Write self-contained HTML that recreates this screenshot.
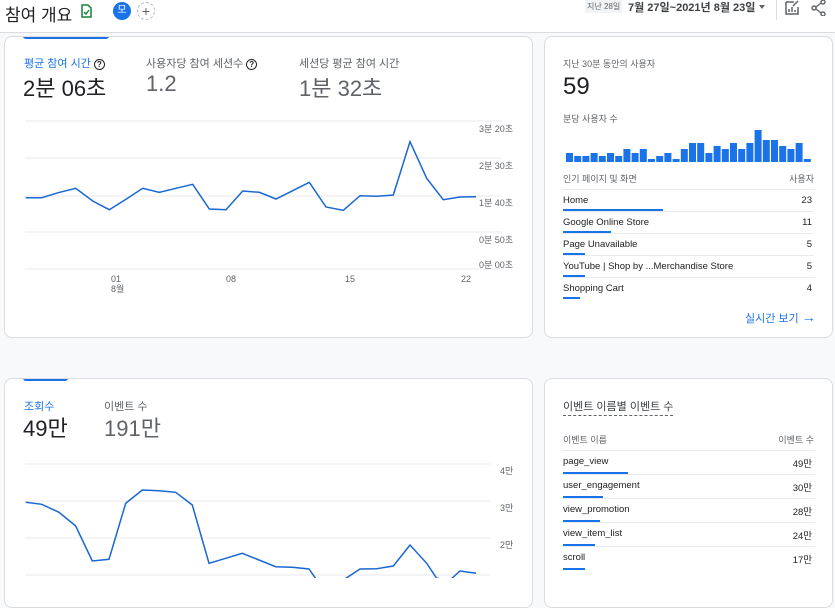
<!DOCTYPE html>
<html><head><meta charset="utf-8">
<style>
*{box-sizing:border-box;margin:0;padding:0}
body{width:835px;height:578px;overflow:hidden;background:#f8f9fa;font-family:"Liberation Sans","Noto Sans CJK KR",sans-serif;color:#202124;position:relative}
.abs{position:absolute}
.card{position:absolute;background:#fff;border:1px solid #dadce0;border-radius:8px;overflow:hidden}
.lbl{font-size:11px;color:#5f6368;position:absolute;white-space:nowrap}
.big{position:absolute;font-size:22px;white-space:nowrap}
.row{position:absolute;left:18px;right:18px;height:22px;border-top:1px solid #e8eaed;font-size:9.5px;color:#202124}
.row span.r{position:absolute;right:2px;top:5px}
.row span.l{position:absolute;left:0;top:5px}
.row i{position:absolute;left:0;bottom:0;height:2px;background:#1a73e8}
.ax{position:absolute;font-size:9px;color:#5f6368;white-space:nowrap}
</style></head><body>
<div class="abs" style="left:0;top:0;width:835px;height:33px;background:#fff;border-bottom:1px solid #dadce0"></div>
<div class="abs" style="left:5px;top:1px;font-size:17px">참여 개요</div>
<svg class="abs" style="left:80px;top:4px" width="13" height="14" viewBox="0 0 13 14"><path d="M2 1h6l3 3v9H2z" fill="none" stroke="#188038" stroke-width="1.5"/><path d="M4 8l2 2 3-4" fill="none" stroke="#188038" stroke-width="1.4"/></svg>
<div class="abs" style="left:113px;top:2px;width:18px;height:18px;border-radius:50%;background:#1a73e8;color:#fff;font-size:10px;text-align:center;line-height:18px">모</div>
<div class="abs" style="left:137px;top:2px;width:18px;height:18px;border-radius:50%;border:1px dashed #bbb;color:#5f6368;font-size:14px;text-align:center;line-height:16px">+</div>
<div class="abs" style="left:585px;top:0;font-size:8px;color:#5f6368;background:#f1f3f4;padding:1px 2px">지난 28일</div>
<div class="abs" style="left:628px;top:-1px;font-size:11px;font-weight:bold;color:#3c4043">7월 27일~2021년 8월 23일</div>
<div class="abs" style="left:759px;top:5px;border:3px solid transparent;border-top:4px solid #5f6368"></div>
<div class="abs" style="left:776px;top:0;width:1px;height:20px;background:#dadce0"></div>
<svg class="abs" style="left:784px;top:0" width="16" height="16" viewBox="0 0 16 16"><path d="M2 2h8M2 2v12h12V7" fill="none" stroke="#5f6368" stroke-width="1.5"/><path d="M5 12V9M8 12V7M11 12V10" stroke="#5f6368" stroke-width="1.5"/><path d="M9 6l5-5" stroke="#5f6368" stroke-width="1.5"/></svg>
<svg class="abs" style="left:811px;top:0" width="16" height="16" viewBox="0 0 16 16"><circle cx="12" cy="2" r="2" fill="none" stroke="#5f6368" stroke-width="1.4"/><circle cx="3" cy="8" r="2" fill="none" stroke="#5f6368" stroke-width="1.4"/><circle cx="12" cy="14" r="2" fill="none" stroke="#5f6368" stroke-width="1.4"/><path d="M5 7l5-4M5 9l5 4" stroke="#5f6368" stroke-width="1.4"/></svg>

<div class="card" style="left:4px;top:36px;width:529px;height:302px">
<div class="abs" style="left:18px;top:-1px;width:86px;height:3px;background:#1a73e8;border-radius:0 0 3px 3px"></div>
<div class="lbl" style="left:19px;top:18px;color:#1a73e8">평균 참여 시간 <b style="color:#202124;border:1.5px solid #202124;border-radius:50%;font-size:8px;padding:0 2px">?</b></div>
<div class="big" style="left:18px;top:34px">2분 06초</div>
<div class="lbl" style="left:141px;top:18px">사용자당 참여 세션수 <b style="color:#202124;border:1.5px solid #202124;border-radius:50%;font-size:8px;padding:0 2px">?</b></div>
<div class="big" style="left:141px;top:34px;color:#5f6368">1.2</div>
<div class="lbl" style="left:294px;top:18px">세션당 평균 참여 시간</div>
<div class="big" style="left:294px;top:34px;color:#5f6368">1분 32초</div>
</div>
<svg class="abs" style="left:0;top:0" width="535" height="340">
<g stroke="#e8eaed" stroke-width="1"><line x1="25" x2="502" y1="121" y2="121"/><line x1="25" x2="502" y1="158" y2="158"/><line x1="25" x2="502" y1="196" y2="196"/><line x1="25" x2="502" y1="232" y2="232"/><line x1="25" x2="502" y1="269" y2="269"/></g>
<polyline fill="none" stroke="#1967d2" stroke-width="1.5" points="25.7,197.7 41.7,197.7 58.3,192.7 75.7,188.3 92.7,201 109.3,209.7 126,199.3 142.7,188.3 159.3,192.3 176,188.3 192.7,184.3 209.3,209 226,209.7 242.7,191 259.3,192.3 276,199 292.7,190.7 309.3,182.3 326,207 343.3,210.3 360,195.7 376.7,196.3 393.3,195 410,141.7 426.7,178.3 443.3,199.7 460,197 476,196.7"/>
</svg>
<div class="ax" style="left:479px;top:122px">3분 20초</div>
<div class="ax" style="left:479px;top:159px">2분 30초</div>
<div class="ax" style="left:479px;top:196px">1분 40초</div>
<div class="ax" style="left:479px;top:233px">0분 50초</div>
<div class="ax" style="left:479px;top:258px">0분 00초</div>
<div class="ax" style="left:111px;top:274px;line-height:10px">01<br>8월</div>
<div class="ax" style="left:226px;top:274px">08</div>
<div class="ax" style="left:345px;top:274px">15</div>
<div class="ax" style="left:461px;top:274px">22</div>

<div class="card" style="left:544px;top:36px;width:289px;height:302px">
<div class="lbl" style="left:18px;top:20px;font-size:9px">지난 30분 동안의 사용자</div>
<div class="big" style="left:18px;top:36px;font-size:24px">59</div>
<div class="lbl" style="left:18px;top:75px;font-size:9px">분당 사용자 수</div>
<div class="lbl" style="left:18px;top:135px;font-size:9px">인기 페이지 및 화면</div>
<div class="lbl" style="right:18px;top:135px;font-size:9px">사용자</div>
<div class="row" style="top:152px"><span class="l">Home</span><span class="r">23</span><i style="width:100px"></i></div>
<div class="row" style="top:174px"><span class="l">Google Online Store</span><span class="r">11</span><i style="width:48px"></i></div>
<div class="row" style="top:196px"><span class="l">Page Unavailable</span><span class="r">5</span><i style="width:22px"></i></div>
<div class="row" style="top:218px"><span class="l">YouTube | Shop by ...Merchandise Store</span><span class="r">5</span><i style="width:22px"></i></div>
<div class="row" style="top:240px"><span class="l">Shopping Cart</span><span class="r">4</span><i style="width:17px"></i></div>
<div class="abs" style="left:200px;top:272px;font-size:11px;color:#1a73e8">실시간 보기 <span style="font-size:14px">→</span></div>
</div>

<div class="card" style="left:4px;top:378px;width:529px;height:230px">
<div class="abs" style="left:18px;top:-1px;width:45px;height:3px;background:#1a73e8;border-radius:0 0 3px 3px"></div>
<div class="lbl" style="left:19px;top:19px;color:#1a73e8">조회수</div>
<div class="big" style="left:18px;top:32px">49만</div>
<div class="lbl" style="left:99px;top:19px">이벤트 수</div>
<div class="big" style="left:99px;top:32px;color:#5f6368">191만</div>
</div>
<svg class="abs" style="left:0;top:440px" width="535" height="138">
<g stroke="#e8eaed"><line x1="25" x2="490" y1="24" y2="24"/><line x1="25" x2="490" y1="61" y2="61"/><line x1="25" x2="490" y1="98" y2="98"/><line x1="25" x2="490" y1="135" y2="135"/></g>
<polyline fill="none" stroke="#1967d2" stroke-width="1.5" transform="translate(0,-440)" points="25.7,502.3 41.7,504.3 59,512.3 75.7,526 92.3,561 109,559.3 125.7,503.3 142.3,490 159,490.7 175.7,492.3 192.3,505 209,563.3 225.7,558.3 242.3,553.3 259,560 275.7,566.7 292.3,567.3 309,569 316.7,580 343.3,580 360,569 376.7,568.7 393.3,566 410,545 426.7,563.3 436.7,578.3 450,580 460,571 476,573.3"/>
</svg>
<div class="ax" style="left:500px;top:464px">4만</div>
<div class="ax" style="left:500px;top:501px">3만</div>
<div class="ax" style="left:500px;top:538px">2만</div>

<div class="card" style="left:544px;top:378px;width:289px;height:230px">
<div class="abs" style="left:18px;top:19px;font-size:11px;color:#3c4043;border-bottom:1px dashed #5f6368;padding-bottom:1px">이벤트 이름별 이벤트 수</div>
<div class="lbl" style="left:18px;top:54px;font-size:9px">이벤트 이름</div>
<div class="lbl" style="right:18px;top:54px;font-size:9px">이벤트 수</div>
<div class="row" style="top:71px;height:24px"><span class="l">page_view</span><span class="r">49만</span><i style="width:65px"></i></div>
<div class="row" style="top:95px;height:24px"><span class="l">user_engagement</span><span class="r">30만</span><i style="width:40px"></i></div>
<div class="row" style="top:119px;height:24px"><span class="l">view_promotion</span><span class="r">28만</span><i style="width:37px"></i></div>
<div class="row" style="top:143px;height:24px"><span class="l">view_item_list</span><span class="r">24만</span><i style="width:32px"></i></div>
<div class="row" style="top:167px;height:24px"><span class="l">scroll</span><span class="r">17만</span><i style="width:22px"></i></div>
</div>
<svg class="abs" style="left:565px;top:120px" width="250" height="42">
<g fill="#1a73e8">
<rect x="1" y="33" width="7" height="9"/><rect x="9.2" y="36" width="7" height="6"/><rect x="17.4" y="36" width="7" height="6"/><rect x="25.6" y="33" width="7" height="9"/><rect x="33.8" y="36" width="7" height="6"/><rect x="42" y="33" width="7" height="9"/><rect x="50.2" y="36" width="7" height="6"/><rect x="58.4" y="29" width="7" height="13"/><rect x="66.6" y="33" width="7" height="9"/><rect x="74.8" y="29" width="7" height="13"/><rect x="83" y="39" width="7" height="3"/><rect x="91.2" y="36" width="7" height="6"/><rect x="99.4" y="33" width="7" height="9"/><rect x="107.6" y="39" width="7" height="3"/><rect x="115.8" y="29" width="7" height="13"/><rect x="124" y="23" width="7" height="19"/><rect x="132.2" y="23" width="7" height="19"/><rect x="140.4" y="33" width="7" height="9"/><rect x="148.6" y="26" width="7" height="16"/><rect x="156.8" y="29" width="7" height="13"/><rect x="165" y="23" width="7" height="19"/><rect x="173.2" y="29" width="7" height="13"/><rect x="181.4" y="23" width="7" height="19"/><rect x="189.6" y="10" width="7" height="32"/><rect x="197.8" y="20" width="7" height="22"/><rect x="206" y="20" width="7" height="22"/><rect x="214.2" y="26" width="7" height="16"/><rect x="222.4" y="29" width="7" height="13"/><rect x="230.6" y="23" width="7" height="19"/><rect x="238.8" y="39" width="7" height="3"/>
</g></svg>
</body></html>
